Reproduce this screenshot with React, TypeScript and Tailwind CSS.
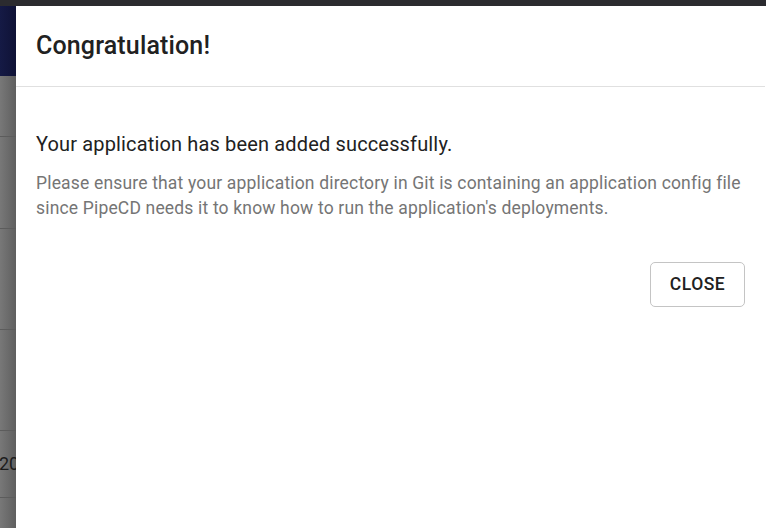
import React from "react";

export default function App() {
  const font = { fontFamily: "Roboto, 'Liberation Sans', sans-serif" };
  return (
    <div className="w-[766px] h-[528px] flex flex-col overflow-hidden bg-white" style={font}>
      <div className="h-[6px] shrink-0 bg-[#2b2b2f]" />
      <div className="flex flex-1 min-h-0">
        <div className="w-[16px] shrink-0 flex flex-col overflow-hidden bg-gradient-to-r from-[#787878] to-[#5f5f5f]">
          <div className="h-[70px] shrink-0 bg-gradient-to-r from-[#151a45] to-[#0f1236]" />
          <div className="h-[61px] shrink-0 border-b border-[#5c5c5c]" />
          <div className="h-[92px] shrink-0 border-b border-[#5c5c5c]" />
          <div className="h-[101px] shrink-0 border-b border-[#5c5c5c]" />
          <div className="h-[101px] shrink-0 border-b border-[#5c5c5c]" />
          <div className="h-[67px] shrink-0 border-b border-[#5c5c5c] flex items-center">
            <span className="text-[18px] leading-none text-[#1c1c1c] whitespace-nowrap -ml-[1px]">20</span>
          </div>
        </div>
        <div className="flex-1 flex flex-col bg-white mr-[1px]">
          <div className="h-[81px] shrink-0 border-b border-[#e0e0e0] flex items-center px-[20px]">
            <h2 className="text-[25px] font-medium text-[#212121] tracking-[0.15px]">Congratulation!</h2>
          </div>
          <div className="px-[20px] pt-[43px]">
            <p className="text-[20px] leading-[28px] text-[#212121] tracking-[0.15px]">
              Your application has been added successfully.
            </p>
            <p className="mt-[13px] text-[17.5px] leading-[25px] text-[#757575] tracking-[0.17px]">
              <span className="block whitespace-nowrap">
                Please ensure that your application directory in Git is containing an application config file
              </span>
              <span className="block whitespace-nowrap">
                since PipeCD needs it to know how to run the application's deployments.
              </span>
            </p>
          </div>
          <div className="flex justify-end px-[20px] mt-[41px]">
            <button className="w-[95px] h-[45px] rounded-[5px] border border-[#c4c4c4] text-[17.5px] font-medium tracking-[0.5px] text-[#212121] flex items-center justify-center">
              CLOSE
            </button>
          </div>
        </div>
      </div>
    </div>
  );
}
